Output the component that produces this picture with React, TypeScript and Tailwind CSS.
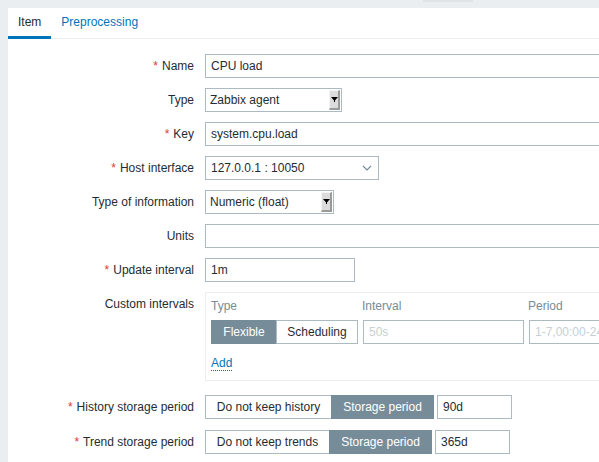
import type { ReactNode } from 'react'

const font = { fontFamily: '"Liberation Sans", Arial, sans-serif' }

function Label({ text, required }: { text: string; required?: boolean }) {
  return (
    <div className="w-[187px] shrink-0 pr-[1px] text-right leading-[24px] text-[#1f2c33]">
      {required && <span className="mr-[4px] text-[#e33734]">*</span>}
      {text}
    </div>
  )
}

function Row({ label, required, children, className = '' }: { label: string; required?: boolean; children: ReactNode; className?: string }) {
  return (
    <div className={`flex items-start ${className}`}>
      <Label text={label} required={required} />
      <div className="ml-[10px] flex">{children}</div>
    </div>
  )
}

function TextInput({ value, width, placeholder }: { value?: string; width: string; placeholder?: string }) {
  return (
    <div className={`h-[24px] ${width} shrink-0 border border-[#acbbc2] bg-white px-[5px] leading-[22px] text-[#1f2c33]`}>
      {value ?? <span className="text-[#c7d0d4]">{placeholder}</span>}
    </div>
  )
}

function OldSelect({ value, width }: { value: string; width: string }) {
  return (
    <div className={`flex h-[24px] ${width} shrink-0 border border-[#acbbc2] bg-white`}>
      <div className="flex-1 pl-[4px] leading-[22px] text-[#1f2c33]">{value}</div>
      <div className="my-[1px] mr-[1px] flex w-[11px] items-center justify-center border-t border-l border-t-[#f4f4f4] border-l-[#f4f4f4] border-r-2 border-b-2 border-r-[#9a9a9a] border-b-[#9a9a9a] bg-[#dcdcdc]">
        <svg width="7" height="5" viewBox="0 0 7 5">
          <path d="M0 0h7L3.5 4z" fill="#000" />
          <rect x="3" y="3" width="1" height="2" fill="#000" />
        </svg>
      </div>
    </div>
  )
}

function Segmented({ items, active, widths }: { items: string[]; active: number; widths: string[] }) {
  return (
    <div className="flex h-[24px] shrink-0">
      {items.map((it, i) => (
        <div
          key={it}
          className={`${widths[i]} text-center leading-[22px] border ${
            i === active
              ? 'border-[#768d99] bg-[#768d99] text-white'
              : 'border-[#acbbc2] bg-white text-[#1f2c33]'
          } ${i > 0 ? '-ml-px' : ''}`}
        >
          {it}
        </div>
      ))}
    </div>
  )
}

export default function App() {
  return (
    <div className="h-[462px] w-[599px] overflow-hidden bg-[#ebeef0] text-[12px]" style={font}>
      <div className="flex h-[8px]">
        <div className="ml-[423px] h-[2px] w-[50px] bg-[#dfe4e7]" />
      </div>
      <div className="ml-[8px] h-[454px] bg-white">
        <div className="flex h-[31px] border-b border-[#ebeef0]">
          <div className="-mb-px h-[31px] border-b-[3px] border-[#0275b8] px-[10px] leading-[29px] text-[#1f2c33]">Item</div>
          <div className="px-[10px] leading-[29px] text-[#0275b8]">Preprocessing</div>
        </div>

        <div className="flex flex-col gap-[10px] pt-[15px]">
          <Row label="Name" required>
            <TextInput value="CPU load" width="w-[453px]" />
          </Row>
          <Row label="Type">
            <OldSelect value="Zabbix agent" width="w-[137px]" />
          </Row>
          <Row label="Key" required>
            <TextInput value="system.cpu.load" width="w-[453px]" />
          </Row>
          <Row label="Host interface" required>
            <div className="flex h-[24px] w-[174px] items-center justify-between border border-[#acbbc2] pl-[5px] pr-[6px] text-[#1f2c33]">
              <span>127.0.0.1 : 10050</span>
              <svg width="10" height="6" viewBox="0 0 10 6">
                <path d="M1 1l4 4 4-4" fill="none" stroke="#768d99" strokeWidth="1.2" />
              </svg>
            </div>
          </Row>
          <Row label="Type of information">
            <OldSelect value="Numeric (float)" width="w-[129px]" />
          </Row>
          <Row label="Units">
            <TextInput value="" width="w-[453px]" />
          </Row>
          <Row label="Update interval" required>
            <TextInput value="1m" width="w-[150px]" />
          </Row>
          <Row label="Custom intervals">
            <div className="w-[453px] border border-[#ebeef0] px-[5px] pt-[5px] pb-[9px]">
              <div className="flex h-[16px] leading-[16px] text-[#768d99]">
                <div className="w-[151px]">Type</div>
                <div className="w-[166px]">Interval</div>
                <div>Period</div>
              </div>
              <div className="mt-[6px] flex">
                <Segmented items={['Flexible', 'Scheduling']} active={0} widths={['w-[66px]', 'w-[82px]']} />
                <div className="ml-[5px]">
                  <TextInput placeholder="50s" width="w-[161px]" />
                </div>
                <div className="ml-[5px]">
                  <TextInput placeholder="1-7,00:00-24:00" width="w-[150px]" />
                </div>
              </div>
              <div className="mt-[11px] flex h-[16px]">
                <span className="border-b border-dotted border-[#0275b8] leading-[16px] text-[#0275b8]">Add</span>
              </div>
            </div>
          </Row>
          <Row label="History storage period" required className="mt-[4px]">
            <Segmented items={['Do not keep history', 'Storage period']} active={1} widths={['w-[127px]', 'w-[103px]']} />
            <div className="ml-[3px]">
              <TextInput value="90d" width="w-[75px]" />
            </div>
          </Row>
          <Row label="Trend storage period" required className="mt-[1px]">
            <Segmented items={['Do not keep trends', 'Storage period']} active={1} widths={['w-[125px]', 'w-[103px]']} />
            <div className="ml-[3px]">
              <TextInput value="365d" width="w-[75px]" />
            </div>
          </Row>
        </div>
      </div>
    </div>
  )
}
